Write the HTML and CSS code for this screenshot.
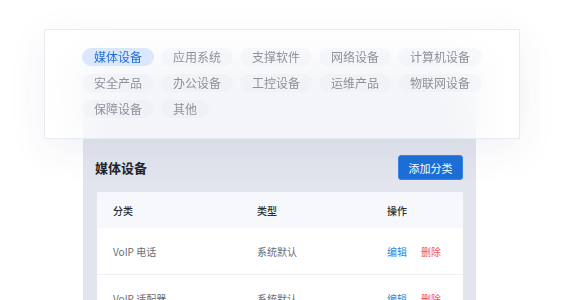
FILE: index.html
```html
<!DOCTYPE html>
<html lang="zh">
<head>
<meta charset="utf-8">
<link rel="stylesheet" href="styles.css">
</head>
<body>
<div class="stage">
  <div class="panel">
    <div class="panel-head">
      <div class="panel-title">媒体设备</div>
      <button class="btn">添加分类</button>
    </div>
    <div class="table">
      <div class="row head">
        <div>分类</div><div>类型</div><div>操作</div>
      </div>
      <div class="row">
        <div>VoIP 电话</div><div>系统默认</div>
        <div class="ops"><span class="edit">编辑</span><span class="del">删除</span></div>
      </div>
      <div class="row">
        <div>VoIP 适配器</div><div>系统默认</div>
        <div class="ops"><span class="edit">编辑</span><span class="del">删除</span></div>
      </div>
    </div>
  </div>
  <div class="card">
    <div class="chips">
      <span class="chip active">媒体设备</span>
      <span class="chip">应用系统</span>
      <span class="chip">支撑软件</span>
      <span class="chip">网络设备</span>
      <span class="chip">计算机设备</span>
      <span class="chip">安全产品</span>
      <span class="chip">办公设备</span>
      <span class="chip">工控设备</span>
      <span class="chip">运维产品</span>
      <span class="chip">物联网设备</span>
      <span class="chip">保障设备</span>
      <span class="chip">其他</span>
    </div>
  </div>
</div>
</body>
</html>
```

FILE: styles.css
```css
html, body {
  margin: 0;
  padding: 0;
  background: #ffffff;
}
body {
  font-family: "Noto Sans CJK SC", "Noto Sans", sans-serif;
}
.stage {
  position: relative;
  width: 564px;
  height: 300px;
  overflow: hidden;
  background: #ffffff;
}
.panel {
  margin: 62px 0 0 83px;
  width: 393px;
  height: 238px;
  box-sizing: border-box;
  background: #e2e5ee;
  padding: 93px 13px 0 14px;
}
.panel-head {
  display: flex;
  align-items: center;
  justify-content: space-between;
  height: 25px;
}
.panel-title {
  margin-left: -2px;
  font-size: 13px;
  font-weight: 700;
  color: #222428;
}
.btn {
  width: 65px;
  height: 25px;
  padding: 0;
  border: 1px solid #3a84e6;
  border-radius: 3px;
  background: #1d6fd8;
  color: #ffffff;
  font-family: inherit;
  font-size: 11px;
  line-height: 22px;
}
.table {
  margin-top: 12px;
  background: #ffffff;
  border-radius: 2px;
  overflow: hidden;
}
.row {
  display: grid;
  grid-template-columns: 144px 130px 1fr;
  padding-left: 16px;
  height: 46px;
  align-items: center;
  font-size: 10px;
  color: #6a6d73;
  border-bottom: 1px solid #eef0f4;
}
.row.head {
  height: 36px;
  background: #f7f8fb;
  color: #2b2d31;
  font-weight: 500;
  border-bottom: none;
}
.ops {
  display: flex;
  gap: 14px;
}
.edit { color: #2d7fe0; }
.del { color: #f05454; }
.card {
  position: absolute;
  left: 44px;
  top: 29px;
  width: 476px;
  height: 110px;
  box-sizing: border-box;
  border: 1px solid rgba(230, 233, 240, 0.9);
  background: rgba(255, 255, 255, 0.6);
  -webkit-backdrop-filter: blur(22px);
  backdrop-filter: blur(22px);
  box-shadow: 0 10px 40px rgba(40, 55, 100, 0.07);
  padding: 18px 30px 0 37px;
}
.chips {
  display: flex;
  flex-wrap: wrap;
  gap: 8px 7px;
  width: 405px;
}
.chip {
  height: 18px;
  line-height: 18px;
  padding: 0 12px;
  border-radius: 9px;
  font-size: 12px;
  color: #8d9199;
  background: rgba(225, 229, 238, 0.22);
}
.chip.active {
  background: #dbe7fb;
  color: #1f6fd8;
}
```
